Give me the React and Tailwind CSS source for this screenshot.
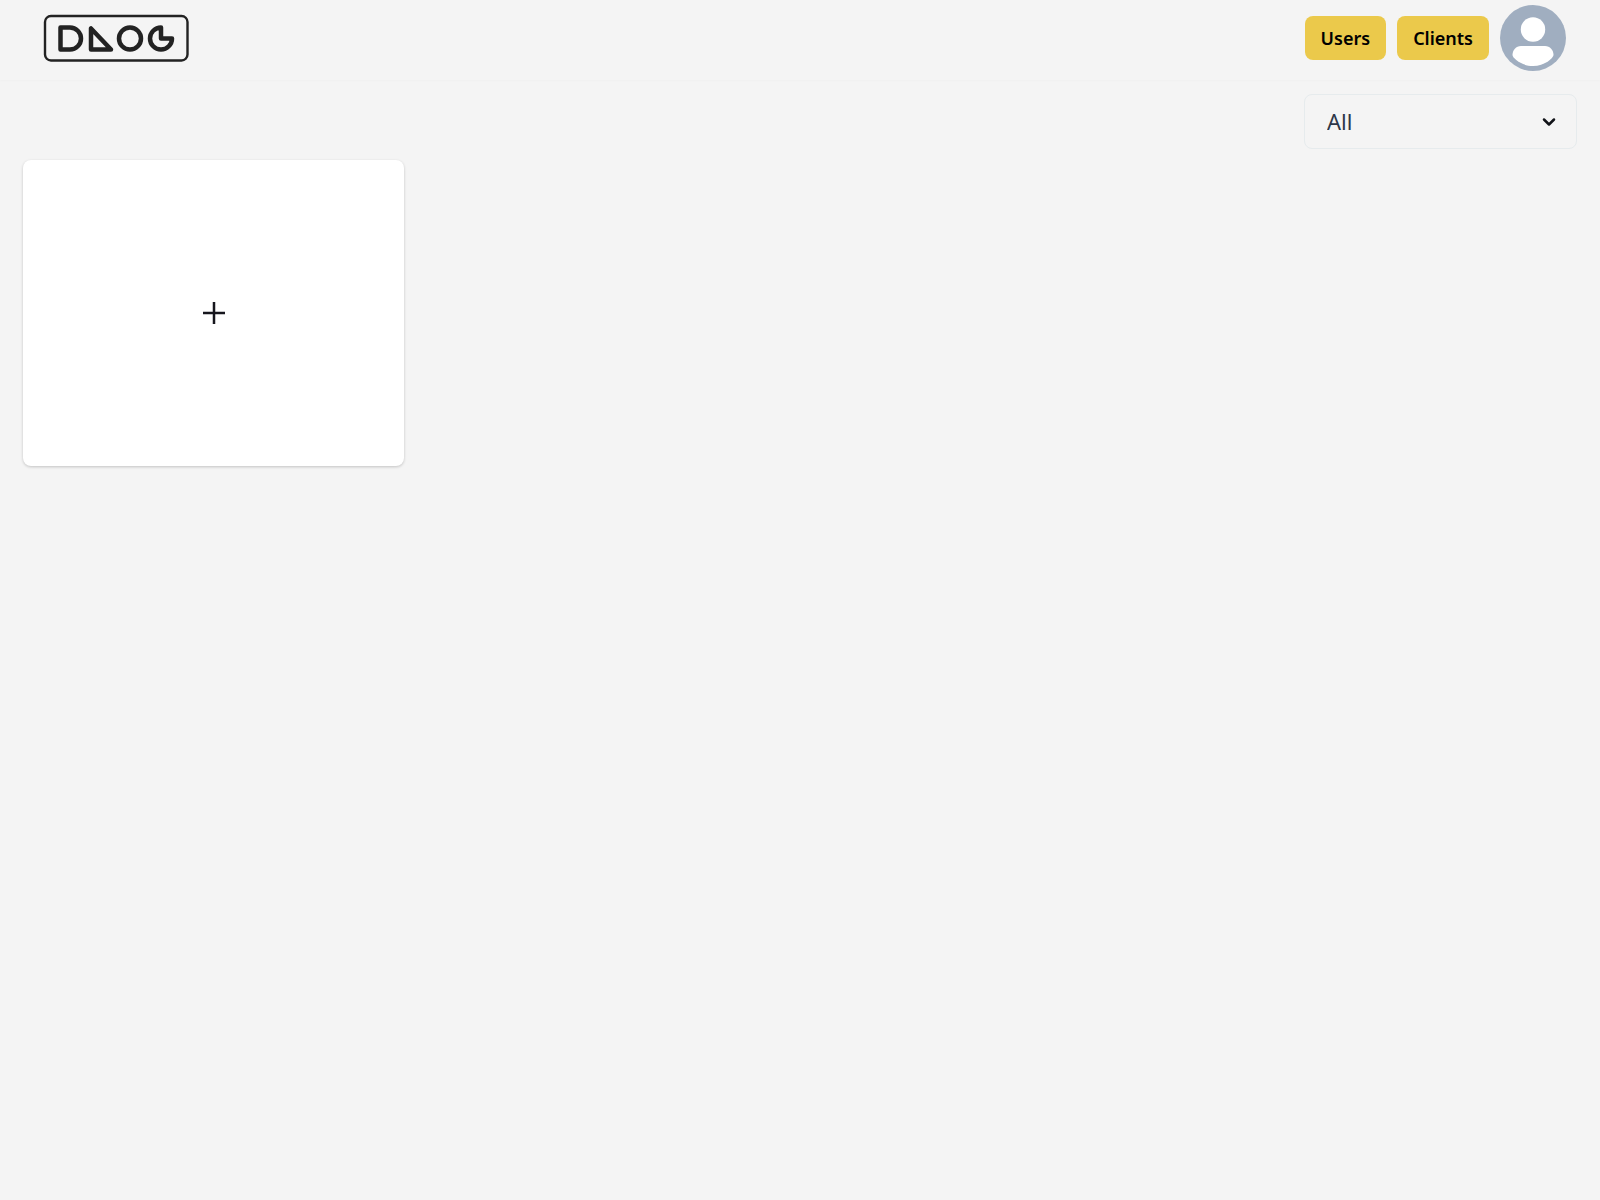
import { ChevronDown } from 'lucide-react'

const NAV_ITEMS = ['Users', 'Clients']

function Logo() {
  return (
    <svg viewBox="0 0 146 48" className="w-[146px] h-12" fill="none" stroke="#222222" role="img" aria-label="DLOG">
      <rect x="2" y="2" width="142.5" height="44.5" rx="6" strokeWidth="2.4" />
      <g strokeWidth="4.5" strokeLinejoin="round" strokeLinecap="round">
        <path d="M17.5 13.5h9.5a11 11 0 0 1 0 22h-9.500z" />
        <path d="M48 14.500v21h20z" />
        <circle cx="87" cy="24.500" r="11" />
        <path d="M118 13.500v11h11a11 11 0 1 1-11-11z" />
      </g>
    </svg>
  )
}

function Avatar() {
  return (
    <button type="button" aria-label="Account" className="rounded-full">
      <svg viewBox="0 0 66 66" className="w-[66px] h-[66px]">
        <circle cx="33" cy="33" r="33" fill="#a0aec0" />
        <circle cx="33" cy="24.500" r="12.2" fill="#ffffff" />
        <path d="M21 41h24c5 0 8.500 4 8.500 9 0 3-9 11-20.500 11s-20.500-8-20.500-11c0-5 3.500-9 8.500-9z" fill="#ffffff" />
      </svg>
    </button>
  )
}

function Header() {
  return (
    <header className="flex items-center justify-between h-20 pl-[43px] pr-[34px] pb-1 shadow-[0_1px_2px_rgba(0,0,0,0.02)]">
      <a href="#">
        <Logo />
      </a>
      <nav className="flex items-center gap-[11px]">
        {NAV_ITEMS.map((item) => (
          <button
            key={item}
            type="button"
            className="h-11 px-4 rounded-lg bg-[#ebc94b] text-black text-lg font-semibold"
          >
            {item}
          </button>
        ))}
        <Avatar />
      </nav>
    </header>
  )
}

function FilterSelect() {
  return (
    <div className="grid items-center w-[273px]">
      <select
        aria-label="Filter"
        className="col-start-1 row-start-1 appearance-none w-full h-[55px] px-[22px] rounded-lg border border-[#e6ebed] bg-transparent text-[22px] text-[#2d3748]"
      >
        <option>All</option>
      </select>
      <ChevronDown
        className="col-start-1 row-start-1 justify-self-end mr-[18px] w-5 h-5 text-[#111318] pointer-events-none"
        strokeWidth={3}
      />
    </div>
  )
}

export default function App() {
  return (
    <div className="min-h-screen bg-[#f4f4f4] font-['Noto_Sans',sans-serif]">
      <Header />
      <main className="px-[23px] pt-[14px]">
        <div className="flex justify-end">
          <FilterSelect />
        </div>
        <div className="grid grid-cols-4 gap-[10px] mt-[11px]">
          <button
            type="button"
            aria-label="Add"
            className="flex items-center justify-center h-[306px] rounded-lg bg-white shadow-[0_1px_3px_rgba(0,0,0,0.2)]"
          >
            <svg viewBox="0 0 22 22" className="w-[22px] h-[22px]" stroke="#16161d" strokeWidth="2.5">
              <path d="M11 0v22M0 11h22" />
            </svg>
          </button>
        </div>
      </main>
    </div>
  )
}
